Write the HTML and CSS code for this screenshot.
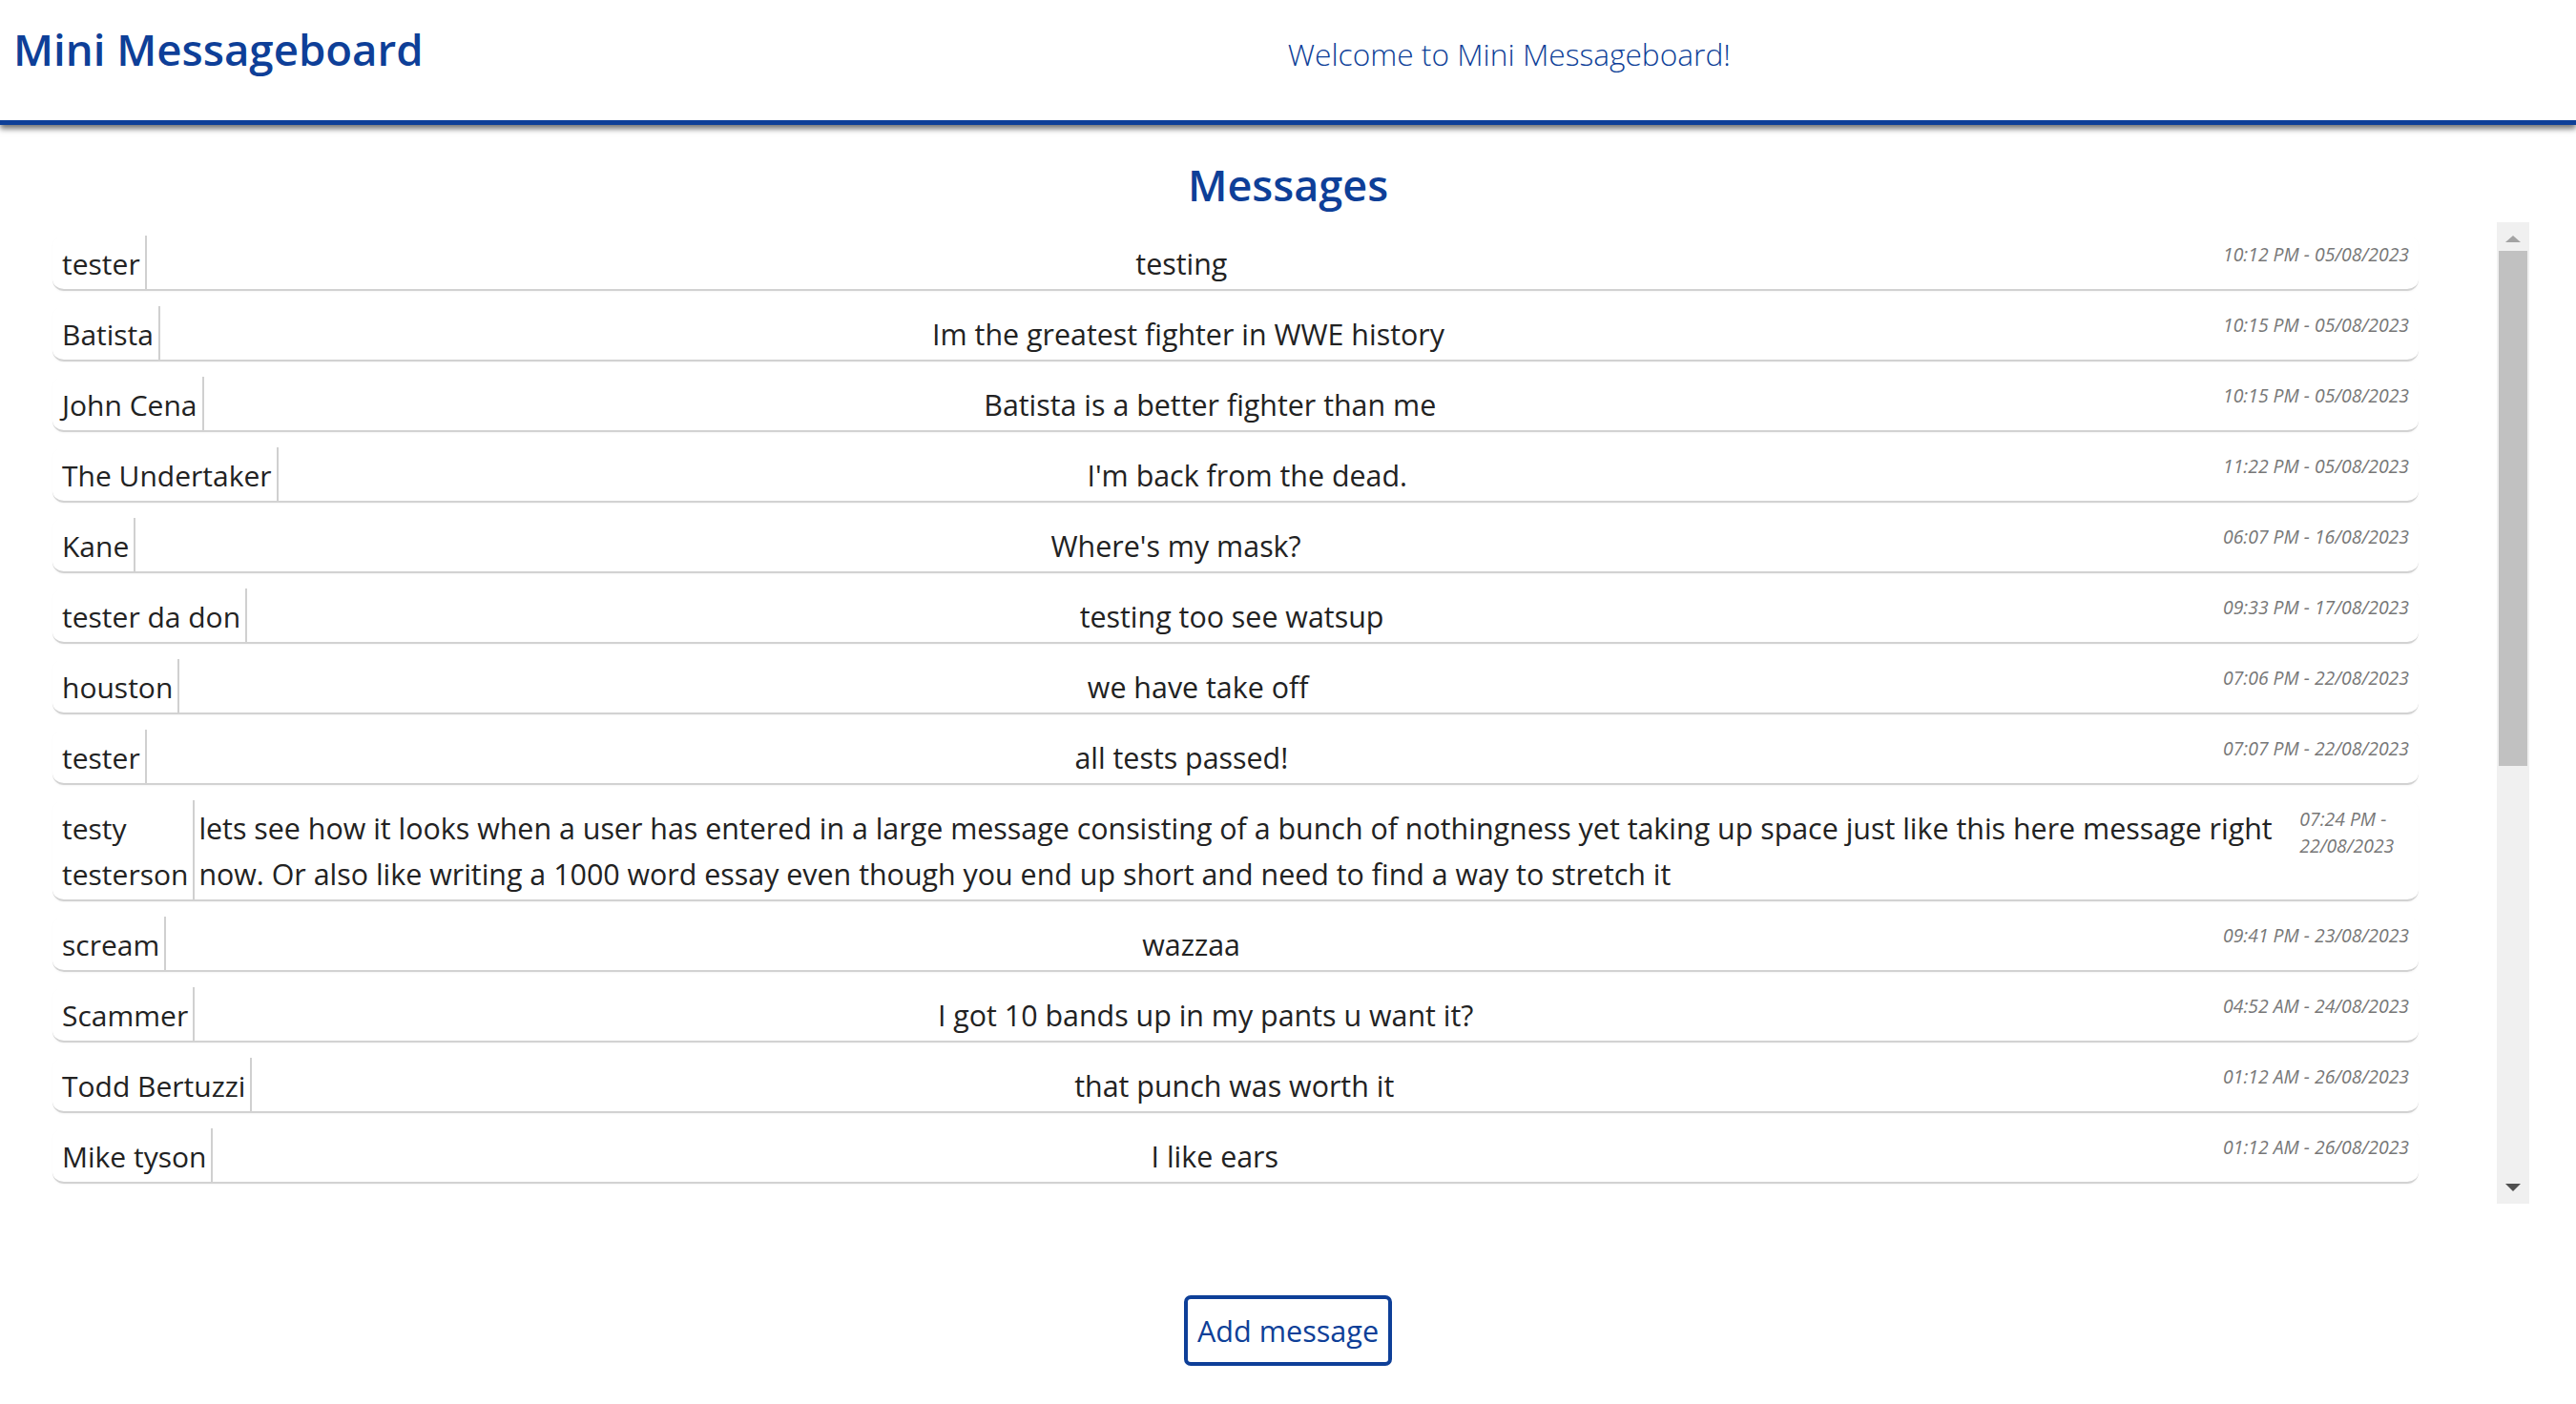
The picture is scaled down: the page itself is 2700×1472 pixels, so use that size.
FILE: index.html
```html
<!DOCTYPE html>
<html lang="en">
<head>
<meta charset="utf-8">
<title>Mini Messageboard</title>
<link rel="stylesheet" href="styles.css">
</head>
<body>
<header class="site-header">
  <h1 class="site-title">Mini Messageboard</h1>
  <p class="welcome">Welcome to Mini Messageboard!</p>
</header>
<main class="board">
  <h2 class="board-title">Messages</h2>
  <div class="message-pane">
    <div class="message-viewport">
      <ul class="message-list">
        <li class="message"><span class="user">tester</span><span class="text">testing</span><span class="time">10:12 PM - 05/08/2023</span></li>
        <li class="message"><span class="user">Batista</span><span class="text">Im the greatest fighter in WWE history</span><span class="time">10:15 PM - 05/08/2023</span></li>
        <li class="message"><span class="user">John Cena</span><span class="text">Batista is a better fighter than me</span><span class="time">10:15 PM - 05/08/2023</span></li>
        <li class="message"><span class="user">The Undertaker</span><span class="text">I'm back from the dead.</span><span class="time">11:22 PM - 05/08/2023</span></li>
        <li class="message"><span class="user">Kane</span><span class="text">Where's my mask?</span><span class="time">06:07 PM - 16/08/2023</span></li>
        <li class="message"><span class="user">tester da don</span><span class="text">testing too see watsup</span><span class="time">09:33 PM - 17/08/2023</span></li>
        <li class="message"><span class="user">houston</span><span class="text">we have take off</span><span class="time">07:06 PM - 22/08/2023</span></li>
        <li class="message"><span class="user">tester</span><span class="text">all tests passed!</span><span class="time">07:07 PM - 22/08/2023</span></li>
        <li class="message"><span class="user">testy testerson</span><span class="text">lets see how it looks when a user has entered in a large message consisting of a bunch of nothingness yet taking up space just like this here message right now. Or also like writing a 1000 word essay even though you end up short and need to find a way to stretch it</span><span class="time">07:24 PM - 22/08/2023</span></li>
        <li class="message"><span class="user">scream</span><span class="text">wazzaa</span><span class="time">09:41 PM - 23/08/2023</span></li>
        <li class="message"><span class="user">Scammer</span><span class="text">I got 10 bands up in my pants u want it?</span><span class="time">04:52 AM - 24/08/2023</span></li>
        <li class="message"><span class="user">Todd Bertuzzi</span><span class="text">that punch was worth it</span><span class="time">01:12 AM - 26/08/2023</span></li>
        <li class="message"><span class="user">Mike tyson</span><span class="text">I like ears</span><span class="time">01:12 AM - 26/08/2023</span></li>
      </ul>
    </div>
    <div class="scrollbar" aria-hidden="true">
      <div class="scroll-btn scroll-up"><span class="arrow arrow-up"></span></div>
      <div class="scroll-track">
        <div class="scroll-thumb"></div>
      </div>
      <div class="scroll-btn scroll-down"><span class="arrow arrow-down"></span></div>
    </div>
  </div>
  <div class="actions">
    <button class="add-btn" type="button">Add message</button>
  </div>
</main>
</body>
</html>
```

FILE: styles.css
```css
* { box-sizing: border-box; }

html, body {
  margin: 0;
  padding: 0;
  background: #ffffff;
}

body {
  font-family: "Open Sans", "Noto Sans", "Liberation Sans", sans-serif;
  color: #222222;
}

.site-header {
  display: flex;
  align-items: flex-start;
  height: 131px;
  border-bottom: 5px solid #0e3f98;
  box-shadow: 0 4px 6px rgba(0, 0, 0, 0.55);
  position: relative;
  z-index: 1;
  background: #ffffff;
}

.site-title {
  margin: 24px 0 0;
  padding: 0 20px 0 14px;
  font-size: 45.6px;
  line-height: 1.2;
  font-weight: 600;
  color: #0e3f98;
  white-space: nowrap;
}

.welcome {
  flex: 1;
  margin: 38px 0 0;
  text-align: center;
  font-size: 31.7px;
  line-height: 38px;
  font-weight: 300;
  color: #0e3f98;
}

.board-title {
  margin: 36px 0 12px;
  text-align: center;
  font-size: 45px;
  line-height: 1.2;
  font-weight: 600;
  color: #0e3f98;
}

.message-pane {
  display: flex;
  margin: 0 49px;
  height: 1029px;
}

.message-viewport {
  flex: 1;
  min-width: 0;
  overflow-y: auto;
  scrollbar-width: none;
  padding: 14px 82px 0 6px;
}

.scrollbar {
  flex: 0 0 34px;
  display: flex;
  flex-direction: column;
  background: #f0f0f0;
}

.scroll-btn {
  height: 30px;
  display: flex;
  justify-content: center;
  align-items: flex-start;
}

.scroll-up {
  padding-top: 14px;
}

.scroll-down {
  padding-top: 9px;
}

.arrow {
  width: 0;
  height: 0;
  border-left: 8px solid transparent;
  border-right: 8px solid transparent;
}

.arrow-up {
  border-bottom: 7px solid #a3a3a3;
}

.arrow-down {
  border-top: 8px solid #505050;
}

.scroll-track {
  flex: 1;
  padding: 0 2px;
}

.scroll-thumb {
  height: 540px;
  background: #c1c1c1;
}

.message-list {
  list-style: none;
  margin: 0;
  padding: 0;
}

.message {
  display: flex;
  margin-bottom: 16px;
  border-bottom: 2px solid #d2d2d2;
  border-radius: 12px;
  box-shadow: 0 1px 2px rgba(0, 0, 0, 0.04);
  font-size: 30.4px;
  line-height: 48px;
}

.user {
  padding: 6px 5px 2px 10px;
  border-right: 2px solid #d0d0d0;
  font-size: 30px;
}

.text {
  margin: 0 auto;
  padding: 6px 3px 2px 4px;
}

.time {
  align-self: flex-start;
  padding: 6px 10px 0 8px;
  font-size: 19.4px;
  line-height: 28px;
  font-style: italic;
  color: #777777;
}

.actions {
  margin-top: 96px;
  text-align: center;
}

.add-btn {
  font-family: "Open Sans", "Noto Sans", "Liberation Sans", sans-serif;
  font-size: 30.6px;
  line-height: 48px;
  padding: 9px 10px;
  border: 4px solid #0e3f98;
  border-radius: 7px;
  background: #ffffff;
  color: #0e3f98;
  cursor: pointer;
}
```
